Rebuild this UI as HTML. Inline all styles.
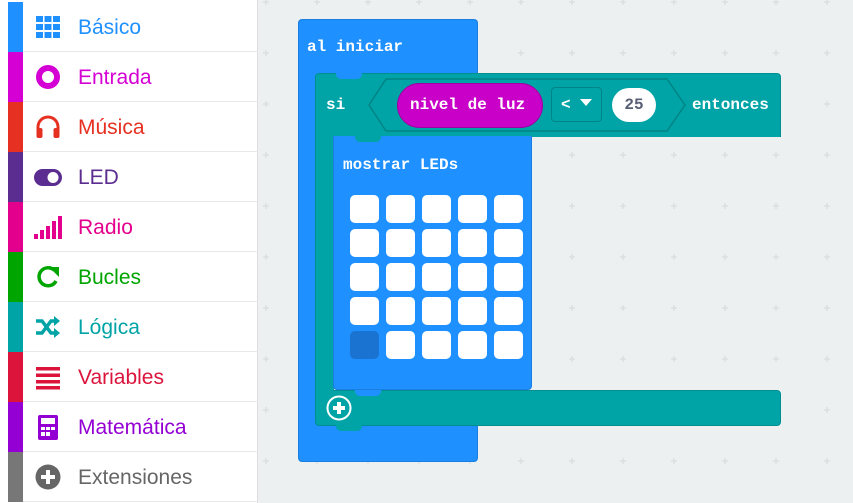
<!DOCTYPE html>
<html><head><meta charset="utf-8"><style>
*{margin:0;padding:0;box-sizing:border-box}
body{width:853px;height:503px;overflow:hidden;position:relative;background:#ecf0f1;font-family:"Liberation Sans",sans-serif}
.a{position:absolute}
#side{left:0;top:0;width:258px;height:503px;background:#fff;border-right:1px solid #ddd}
.row{position:absolute;left:8px;width:250px;height:50px;border-bottom:1px solid #e8e8e8}
.bar{position:absolute;left:0;top:0;width:15px;height:50px}
.lbl{position:absolute;left:70px;top:14px;font-size:21px}
.ic{position:absolute;left:27px;top:12px;width:26px;height:26px}
.t{color:#fff;font-family:"Liberation Mono",monospace;font-weight:bold;font-size:16px;position:absolute}
.led{position:absolute;width:29px;height:28px;background:#fff;border-radius:5px}
</style></head><body>
<div class="a" style="left:0;top:230px;width:8px;height:170px;background:#b0b7bb"></div>
<div id="side" class="a">
<div class="row" style="top:2px"><div class="bar" style="background:#1e90ff"></div>
<svg class="ic" viewBox="0 0 26 26"><g fill="#1e90ff"><rect x="1" y="2" width="7" height="6"/><rect x="9.5" y="2" width="7" height="6"/><rect x="18" y="2" width="7" height="6"/><rect x="1" y="10" width="7" height="6"/><rect x="9.5" y="10" width="7" height="6"/><rect x="18" y="10" width="7" height="6"/><rect x="1" y="18" width="7" height="6"/><rect x="9.5" y="18" width="7" height="6"/><rect x="18" y="18" width="7" height="6"/></g></svg>
<div class="lbl" style="color:#1e90ff">Básico</div></div>
<div class="row" style="top:52px"><div class="bar" style="background:#d400d4"></div>
<svg class="ic" viewBox="0 0 26 26"><circle cx="13" cy="13" r="9" fill="none" stroke="#d400d4" stroke-width="6"/></svg>
<div class="lbl" style="color:#d400d4">Entrada</div></div>
<div class="row" style="top:102px"><div class="bar" style="background:#e63022"></div>
<svg class="ic" viewBox="0 0 26 26"><path d="M3 20V13a10 10 0 0 1 20 0v7" fill="none" stroke="#e63022" stroke-width="3"/><rect x="1.5" y="14" width="6" height="10" rx="2" fill="#e63022"/><rect x="18.5" y="14" width="6" height="10" rx="2" fill="#e63022"/></svg>
<div class="lbl" style="color:#e63022">Música</div></div>
<div class="row" style="top:152px"><div class="bar" style="background:#5c2d91"></div>
<svg class="ic" viewBox="0 0 30 26" style="width:30px;left:25px"><rect x="1" y="5" width="28" height="17" rx="8.5" fill="#5c2d91"/><circle cx="20" cy="13.5" r="5.5" fill="#fff"/></svg>
<div class="lbl" style="color:#5c2d91">LED</div></div>
<div class="row" style="top:202px"><div class="bar" style="background:#e3008c"></div>
<svg class="ic" viewBox="0 0 30 26" style="width:30px;left:25px"><g fill="#e3008c"><rect x="1" y="20" width="4" height="5"/><rect x="7" y="16" width="4" height="9"/><rect x="13" y="12" width="4" height="13"/><rect x="19" y="7" width="4" height="18"/><rect x="25" y="2" width="4" height="23"/></g></svg>
<div class="lbl" style="color:#e3008c">Radio</div></div>
<div class="row" style="top:252px"><div class="bar" style="background:#00a500"></div>
<svg class="ic" viewBox="0 0 26 26"><path d="M21 17A9 9 0 1 1 19 6" fill="none" stroke="#00a500" stroke-width="3.5"/><path d="M14 3h10v10z" fill="#00a500"/></svg>
<div class="lbl" style="color:#00a500">Bucles</div></div>
<div class="row" style="top:302px"><div class="bar" style="background:#00a4a6"></div>
<svg class="ic" viewBox="0 0 26 26"><g fill="none" stroke="#00a4a6" stroke-width="3.5"><path d="M1 7h6l9 12h5"/><path d="M1 19h6l9-12h5"/></g><path d="M19 2l6 5-6 5zM19 14l6 5-6 5z" fill="#00a4a6"/></svg>
<div class="lbl" style="color:#00a4a6">Lógica</div></div>
<div class="row" style="top:352px"><div class="bar" style="background:#dc143c"></div>
<svg class="ic" viewBox="0 0 26 26"><g fill="#dc143c"><rect x="1" y="3" width="24" height="3.5"/><rect x="1" y="9.5" width="24" height="3.5"/><rect x="1" y="16" width="24" height="3.5"/><rect x="1" y="22" width="24" height="3.5"/></g></svg>
<div class="lbl" style="color:#dc143c">Variables</div></div>
<div class="row" style="top:402px"><div class="bar" style="background:#9400d3"></div>
<svg class="ic" viewBox="0 0 26 26"><rect x="3" y="1" width="20" height="25" rx="2" fill="#9400d3"/><rect x="6" y="4" width="14" height="6" fill="#fff"/><g fill="#fff"><rect x="6" y="13" width="4" height="3"/><rect x="11" y="13" width="4" height="3"/><rect x="16" y="13" width="4" height="3"/><rect x="6" y="18" width="4" height="4"/><rect x="11" y="18" width="4" height="4"/></g></svg>
<div class="lbl" style="color:#9400d3">Matemática</div></div>
<div class="row" style="top:452px"><div class="bar" style="background:#777"></div>
<svg class="ic" viewBox="0 0 26 26"><circle cx="13" cy="13" r="12.5" fill="#666"/><path d="M13 6v14M6 13h14" stroke="#fff" stroke-width="4"/></svg>
<div class="lbl" style="color:#666">Extensiones</div></div>
</div>

<svg class="a" style="left:259px;top:0" width="594" height="503">
<defs><pattern id="g" x="0" y="0" width="51" height="51" patternUnits="userSpaceOnUse" patternTransform="translate(-2,2)"><path d="M6 0h6M9 -3v6" stroke="#d5d9db" stroke-width="1" transform="translate(0,51)"/><path d="M6 0h6M9 -3v6" stroke="#d5d9db"/></pattern></defs>
<rect width="594" height="503" fill="url(#g)"/>
</svg>

<div class="a" style="left:298px;top:19px;width:180px;height:60px;background:#1e90ff;border-radius:4px 4px 0 0;border:1px solid #1a7fe0;border-bottom:none"></div>
<div class="a" style="left:298px;top:70px;width:20px;height:340px;background:#1e90ff;border-left:1px solid #1a7fe0"></div>
<div class="a" style="left:298px;top:398px;width:180px;height:64px;background:#1e90ff;border-radius:0 0 4px 4px;border:1px solid #1a7fe0;border-top:none"></div>
<div class="t" style="left:307px;top:38px">al iniciar</div>

<div class="a" style="left:315px;top:73px;width:466px;height:64px;background:#00a4a6;border-radius:4px 4px 0 0;border:1px solid #008f91;border-bottom:none"></div>
<div class="a" style="left:315px;top:130px;width:19px;height:270px;background:#00a4a6;border-left:1px solid #008f91"></div>
<div class="a" style="left:315px;top:390px;width:466px;height:36px;background:#00a4a6;border-radius:0 4px 4px 4px;border:1px solid #008f91"></div>
<div class="a" style="left:316px;top:389px;width:17px;height:4px;background:#00a4a6"></div>
<div class="a" style="left:336px;top:73px;width:26px;height:6px;background:#1e90ff;border-radius:0 0 5px 5px"></div>
<div class="t" style="left:326px;top:96px">si</div>
<svg class="a" style="left:368px;top:78px" width="320" height="55"><path d="M18 1H299L317 27L299 53H18L1 27Z" fill="#00a4a6" stroke="#008486" stroke-width="1.5"/></svg>
<div class="a" style="left:397px;top:83px;width:146px;height:45px;background:#c800c8;border-radius:23px;border:1px solid #a000a0"></div>
<div class="t" style="left:410px;top:96px">nivel de luz</div>
<div class="a" style="left:551px;top:87px;width:51px;height:35px;border:1px solid #008486;border-radius:4px"></div>
<div class="t" style="left:561px;top:96px">&lt;</div>
<svg class="a" style="left:580px;top:99px" width="12" height="8"><path d="M0 0h12L6 7z" fill="#fff"/></svg>
<div class="a" style="left:612px;top:88px;width:44px;height:34px;background:#fff;border-radius:17px"></div>
<div class="t" style="left:619px;top:96px;color:#575e75;width:30px;text-align:center">25</div>
<div class="t" style="left:692px;top:96px">entonces</div>

<div class="a" style="left:333px;top:136px;width:199px;height:254px;background:#1e90ff;border-radius:0 0 4px 4px;border:1px solid #1a7fe0;border-top:none"></div>
<div class="a" style="left:355px;top:136px;width:26px;height:6px;background:#00a4a6;border-radius:0 0 5px 5px"></div>
<div class="a" style="left:355px;top:390px;width:26px;height:6px;background:#1e90ff;border-radius:0 0 5px 5px"></div>
<div class="a" style="left:336px;top:425px;width:26px;height:6px;background:#00a4a6;border-radius:0 0 5px 5px"></div>
<div class="t" style="left:343px;top:156px">mostrar LEDs</div>
<div class="led" style="left:350px;top:195px"></div><div class="led" style="left:386px;top:195px"></div><div class="led" style="left:422px;top:195px"></div><div class="led" style="left:458px;top:195px"></div><div class="led" style="left:494px;top:195px"></div>
<div class="led" style="left:350px;top:229px"></div><div class="led" style="left:386px;top:229px"></div><div class="led" style="left:422px;top:229px"></div><div class="led" style="left:458px;top:229px"></div><div class="led" style="left:494px;top:229px"></div>
<div class="led" style="left:350px;top:263px"></div><div class="led" style="left:386px;top:263px"></div><div class="led" style="left:422px;top:263px"></div><div class="led" style="left:458px;top:263px"></div><div class="led" style="left:494px;top:263px"></div>
<div class="led" style="left:350px;top:297px"></div><div class="led" style="left:386px;top:297px"></div><div class="led" style="left:422px;top:297px"></div><div class="led" style="left:458px;top:297px"></div><div class="led" style="left:494px;top:297px"></div>
<div class="led" style="left:350px;top:331px;background:#1a73d0"></div><div class="led" style="left:386px;top:331px"></div><div class="led" style="left:422px;top:331px"></div><div class="led" style="left:458px;top:331px"></div><div class="led" style="left:494px;top:331px"></div>

<svg class="a" style="left:326px;top:395px" width="26" height="26"><circle cx="13" cy="13" r="11.5" fill="none" stroke="#fff" stroke-width="2"/><path d="M13 7v12M7 13h12" stroke="#fff" stroke-width="4"/></svg>
</body></html>
